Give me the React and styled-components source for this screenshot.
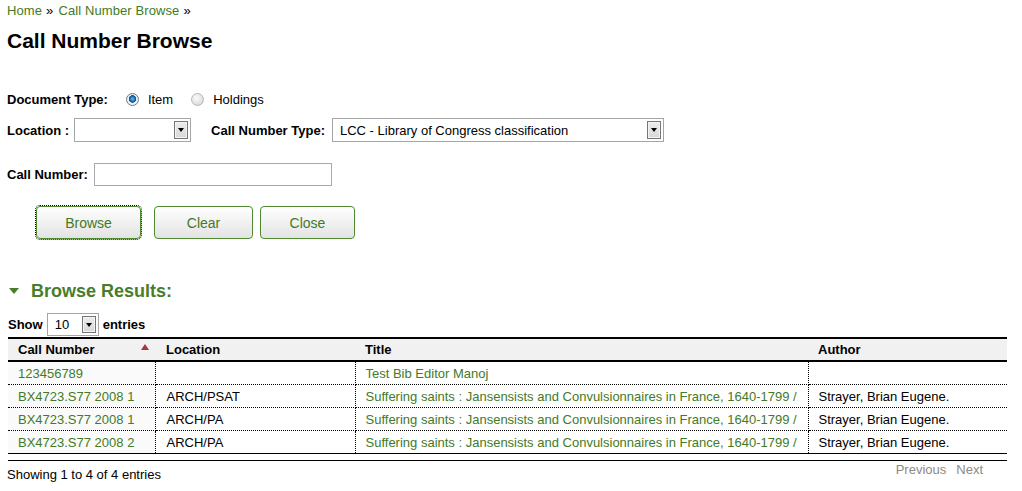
import React from 'react';
import styled, { createGlobalStyle } from 'styled-components';

const GlobalStyle = createGlobalStyle`
  body {
    margin: 0;
    background: #fff;
    color: #000;
    font-family: "Liberation Sans", Arial, sans-serif;
    font-size: 13px;
  }
`

const green = '#437a26'

const Page = styled.div`
  padding: 0 15px 0 7px;
`

const Breadcrumb = styled.div`
  height: 21px;
  line-height: 21px;
  font-size: 13px;
  letter-spacing: 0.1px;
`

const Crumb = styled.a`
  color: ${green};
  text-decoration: none;
`

const Sep = styled.span`
  margin: 0 5px 0 4px;
`

const Title = styled.h1`
  margin: 8px 0 0;
  font-size: 21px;
  line-height: 24px;
  font-weight: bold;
`

const Form = styled.div`
  margin-top: 36px;
`

const Row = styled.div`
  display: flex;
  align-items: center;
  height: ${p => p.$h || 20}px;
  margin-top: ${p => p.$mt || 0}px;
`

const Label = styled.label`
  font-weight: bold;
  margin-right: ${p => p.$mr || 4}px;
  margin-left: ${p => p.$ml || 0}px;
`

const Radio = styled.span`
  width: 11px;
  height: 11px;
  border-radius: 50%;
  border: 1px solid ${p => (p.$checked ? '#6b7c8c' : '#b5b5b5')};
  background: ${p =>
    p.$checked
      ? 'radial-gradient(circle at 50% 45%, #6fc0f0 0, #1f7fc0 2px, #14507e 3.5px, #e8eef2 4px, #f5f5f5 100%)'
      : 'radial-gradient(circle at 40% 35%, #fafafa 0, #e2e2e2 60%, #cfcfcf 100%)'};
  margin: 0 9px 0 ${p => p.$ml || 0}px;
`

const SelectBox = styled.div`
  box-sizing: border-box;
  width: ${p => p.$w}px;
  height: ${p => p.$h || 24}px;
  border: 1px solid #a5a5a5;
  display: flex;
  align-items: center;
  padding: 0 2px 0 7px;
  background: #fff;
  font-size: 13px;
  font-weight: normal;
`

const SelectValue = styled.span`
  flex: 1;
  white-space: nowrap;
  overflow: hidden;
`

const ArrowBox = styled.span`
  box-sizing: border-box;
  width: 14px;
  height: ${p => p.$h || 18}px;
  border: 1px solid #767676;
  box-shadow: inset 0 0 0 1px #f4f4f4;
  background: linear-gradient(#ececec, #d8d8d8);
  display: flex;
  align-items: center;
  justify-content: center;
  &::after {
    content: '';
    border-left: 3.5px solid transparent;
    border-right: 3.5px solid transparent;
    border-top: 4px solid #000;
  }
`

const TextInput = styled.input`
  box-sizing: border-box;
  width: 238px;
  height: 23px;
  border: 1px solid #a9a9a9;
  margin: 0;
  padding: 0 4px;
`

const ButtonRow = styled.div`
  display: flex;
  margin-top: 20px;
  padding-left: 29px;
`

const Button = styled.button`
  box-sizing: border-box;
  width: ${p => p.$w}px;
  height: 33px;
  margin-right: ${p => p.$mr || 0}px;
  border: 1px solid #4f8a30;
  border-radius: 4px;
  background: linear-gradient(#ffffff, #f1f1f1 50%, #e3e3e3);
  color: ${green};
  font-family: "Liberation Sans", Arial, sans-serif;
  font-size: 14px;
  padding: 0;
  outline: ${p => (p.$focus ? '1px dotted #000' : 'none')};
`

const SectionTitle = styled.h2`
  display: flex;
  align-items: center;
  margin: 41px 0 0 2px;
  height: 22px;
  font-size: 18px;
  color: #4a7d2a;
  &::before {
    content: '';
    border-left: 5px solid transparent;
    border-right: 5px solid transparent;
    border-top: 6px solid #4a7d2a;
    margin-right: 12px;
  }
`

const ShowRow = styled.div`
  display: flex;
  align-items: center;
  margin: 11px 0 0 1px;
  height: 23px;
  font-weight: bold;
  gap: 4px;
`

const Table = styled.table`
  margin: 1px 0 0 1px;
  width: 999px;
  border-collapse: collapse;
  border-top: 2px solid #000;
  table-layout: fixed;
  font-size: 13px;
`

const Th = styled.th`
  position: relative;
  height: 21px;
  padding: 0 10px 0 ${p => p.$pl || 10}px;
  background: #f1f1f1;
  border-bottom: 2px solid #000;
  text-align: left;
  font-weight: bold;
`

const SortArrow = styled.span`
  position: absolute;
  right: 6px;
  top: 5px;
  border-left: 4px solid transparent;
  border-right: 4px solid transparent;
  border-bottom: 6px solid #a33a3a;
`

const Td = styled.td`
  height: 22px;
  padding: 0 10px 0 ${p => p.$pl || 10}px;
  white-space: nowrap;
  overflow: hidden;
  color: ${p => (p.$link ? green : '#000')};
  background: ${p => (p.$sorted ? '#fafafa' : '#fff')};
  border-bottom: 1px dotted #000;
  border-right: ${p => (p.$last ? 'none' : '1px dotted #000')};
  tr:last-child > & {
    border-bottom: 1px solid #000;
  }
`

const FootLine = styled.div`
  width: 999px;
  margin: 6px 0 0 1px;
  border-top: 1px solid #000;
`

const Footer = styled.div`
  display: flex;
  justify-content: space-between;
  width: 999px;
`

const Info = styled.div`
  margin-top: 6px;
  line-height: 16px;
`

const Paginate = styled.div`
  display: flex;
  gap: 10px;
  margin: 1px 23px 0 0;
  line-height: 16px;
  color: #8a8a8a;
`

const rows = [
  { call: '123456789', loc: '', title: 'Test Bib Editor Manoj', author: '' },
  { call: 'BX4723.S77 2008 1', loc: 'ARCH/PSAT', title: 'Suffering saints : Jansensists and Convulsionnaires in France, 1640-1799 /', author: 'Strayer, Brian Eugene.' },
  { call: 'BX4723.S77 2008 1', loc: 'ARCH/PA', title: 'Suffering saints : Jansensists and Convulsionnaires in France, 1640-1799 /', author: 'Strayer, Brian Eugene.' },
  { call: 'BX4723.S77 2008 2', loc: 'ARCH/PA', title: 'Suffering saints : Jansensists and Convulsionnaires in France, 1640-1799 /', author: 'Strayer, Brian Eugene.' },
]

function App() {
  return (
    <Page>
      <GlobalStyle />
      <Breadcrumb>
        <Crumb>Home</Crumb><Sep>»</Sep><Crumb>Call Number Browse</Crumb><Sep>»</Sep>
      </Breadcrumb>
      <Title>Call Number Browse</Title>

      <Form>
        <Row>
          <Label $mr={18}>Document Type:</Label>
          <Radio $checked />Item
          <Radio $ml={18} />Holdings
        </Row>
        <Row $h={24} $mt={9}>
          <Label $mr={5}>Location :</Label>
          <SelectBox $w={117}><SelectValue /><ArrowBox /></SelectBox>
          <Label $ml={20} $mr={7}>Call Number Type:</Label>
          <SelectBox $w={332}>
            <SelectValue>LCC - Library of Congress classification</SelectValue>
            <ArrowBox />
          </SelectBox>
        </Row>
        <Row $h={23} $mt={21}>
          <Label $mr={6}>Call Number:</Label>
          <TextInput />
        </Row>
        <ButtonRow>
          <Button $w={105} $mr={13} $focus>Browse</Button>
          <Button $w={99} $mr={7}>Clear</Button>
          <Button $w={95}>Close</Button>
        </ButtonRow>
      </Form>

      <SectionTitle>Browse Results:</SectionTitle>
      <ShowRow>
        Show
        <SelectBox $w={52} $h={23}>
          <SelectValue>10</SelectValue>
          <ArrowBox $h={17} />
        </SelectBox>
        entries
      </ShowRow>

      <Table>
        <colgroup>
          <col style={{ width: 147 }} />
          <col style={{ width: 200 }} />
          <col style={{ width: 453 }} />
          <col style={{ width: 199 }} />
        </colgroup>
        <thead>
          <tr>
            <Th>Call Number<SortArrow /></Th>
            <Th $pl={11}>Location</Th>
            <Th>Title</Th>
            <Th>Author</Th>
          </tr>
        </thead>
        <tbody>
          {rows.map((r, i) => (
            <tr key={i}>
              <Td $link $sorted>{r.call}</Td>
              <Td $pl={11}>{r.loc}</Td>
              <Td $link>{r.title}</Td>
              <Td $last>{r.author}</Td>
            </tr>
          ))}
        </tbody>
      </Table>
      <FootLine />
      <Footer>
        <Info>Showing 1 to 4 of 4 entries</Info>
        <Paginate><span>Previous</span><span>Next</span></Paginate>
      </Footer>
    </Page>
  )
}

export default App;
